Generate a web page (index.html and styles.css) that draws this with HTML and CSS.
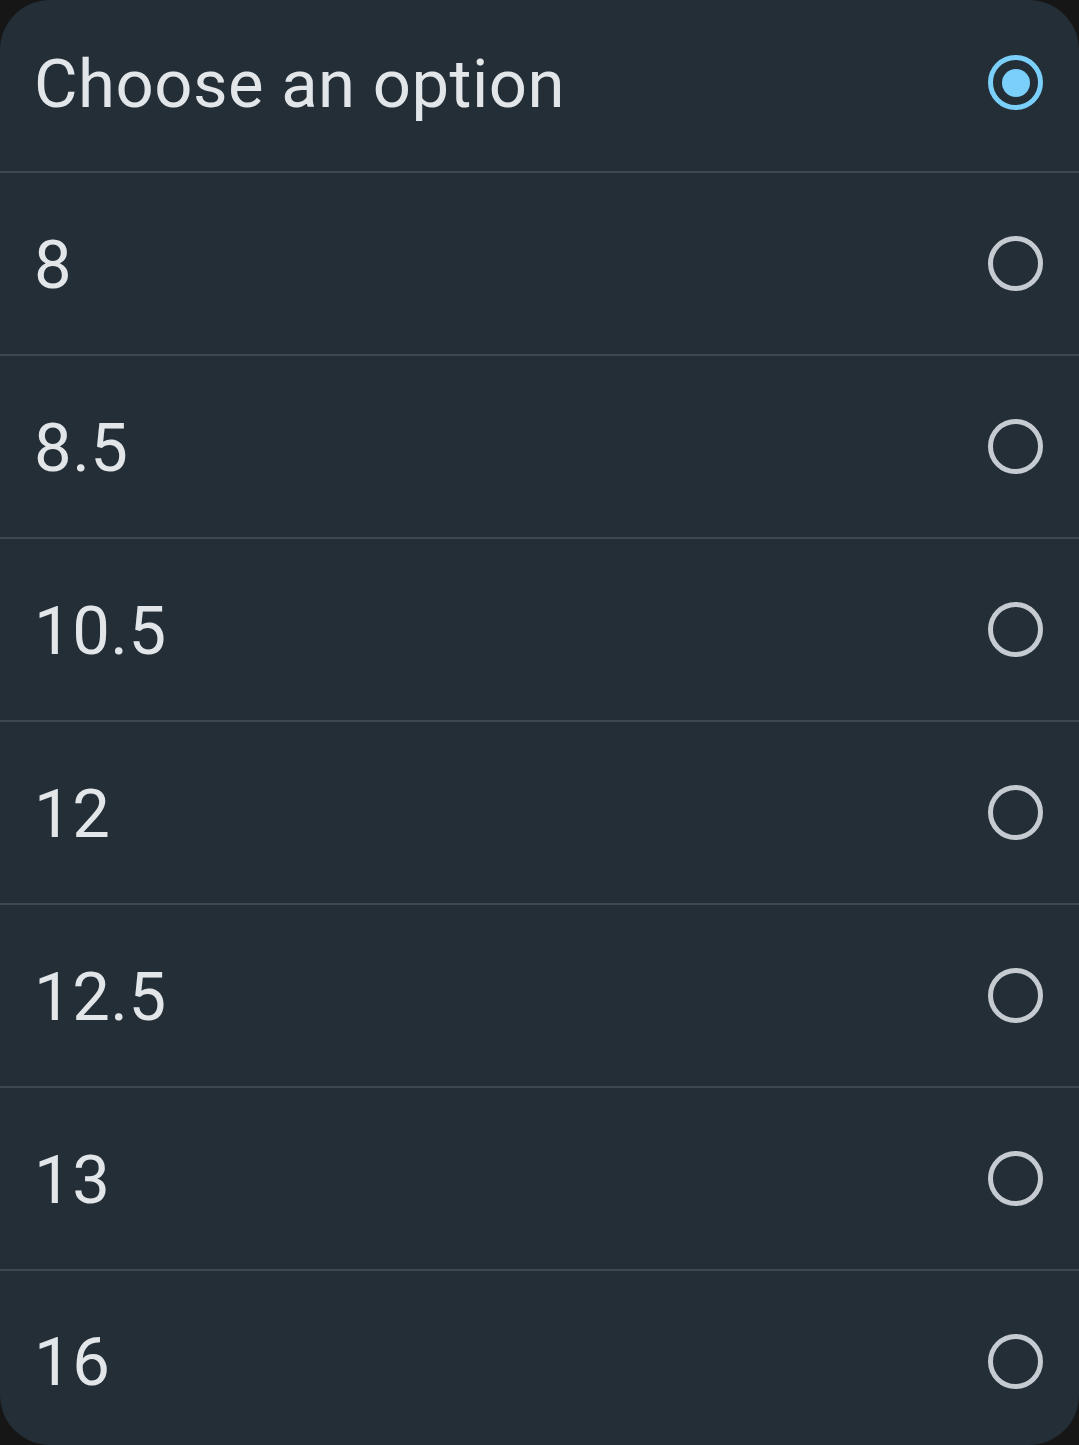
FILE: index.html
```html
<!DOCTYPE html>
<html>
<head>
<meta charset="utf-8">
<link rel="stylesheet" href="styles.css">
</head>
<body>
<div class="sheet">
  <div class="row first"><span class="label">Choose an option</span><span class="radio on"></span></div>
  <div class="row"><span class="label">8</span><span class="radio"></span></div>
  <div class="row"><span class="label">8.5</span><span class="radio"></span></div>
  <div class="row"><span class="label">10.5</span><span class="radio"></span></div>
  <div class="row"><span class="label">12</span><span class="radio"></span></div>
  <div class="row"><span class="label">12.5</span><span class="radio"></span></div>
  <div class="row"><span class="label">13</span><span class="radio"></span></div>
  <div class="row last"><span class="label">16</span><span class="radio"></span></div>
</div>
</body>
</html>
```
FILE: styles.css
```css
html, body {
  margin: 0;
  padding: 0;
  background: #161616;
}
body {
  width: 1079px;
  height: 1445px;
  overflow: hidden;
  font-family: Roboto, "Noto Sans", sans-serif;
}
.sheet {
  width: 1079px;
  height: 1445px;
  background: #232e36;
  border-radius: 50px;
  display: flex;
  flex-direction: column;
  overflow: hidden;
}
.row {
  height: 181px;
  flex: none;
  display: flex;
  align-items: center;
  justify-content: space-between;
  padding: 0 36px 0 34px;
  border-top: 2px solid #3d4850;
  box-sizing: content-box;
}
.row.first {
  height: 171px;
  border-top: none;
}
.row.last {
  height: auto;
  flex: 1;
  padding-top: 6px;
}
.label {
  color: #e3e6e9;
  font-size: 67px;
  line-height: 1;
  letter-spacing: 0.5px;
  margin-top: 3px;
}
.first .label { margin-top: -3px; }
.radio {
  width: 45px;
  height: 45px;
  border: 5.5px solid #c5cbd1;
  border-radius: 50%;
  position: relative;
  flex: none;
}
.first .radio { margin-top: -6px; }
.radio.on {
  border-color: #7bd0fb;
}
.radio.on::after {
  content: "";
  position: absolute;
  left: 50%;
  top: 50%;
  width: 28px;
  height: 28px;
  margin: -14px 0 0 -14px;
  border-radius: 50%;
  background: #7bd0fb;
}
```
